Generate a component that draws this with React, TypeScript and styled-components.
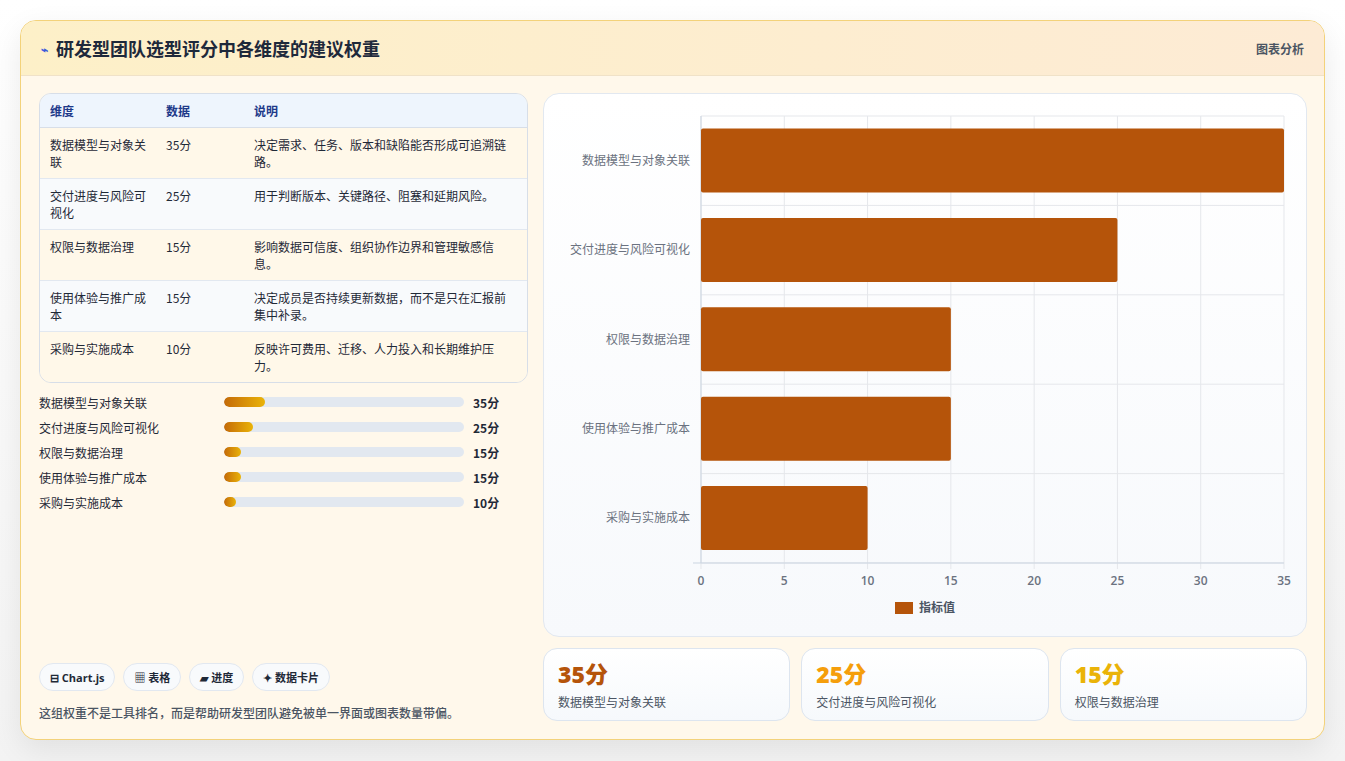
import React from "react";
import styled, { createGlobalStyle } from "styled-components";

const G = createGlobalStyle`
  html,body{margin:0;padding:0;background:#f5f5f5;}
  body{font-family:"Noto Sans CJK SC","Noto Sans",sans-serif;}
  *{box-sizing:border-box;}
`;
const Page = styled.div`width:1345px;height:761px;padding:20px 20px 21px 20px;background:linear-gradient(180deg,#fff 0%,#f3f3f3 100%);`;
const Card = styled.div`height:720px;border:1px solid #f3d27a;border-radius:16px;background:#fff8eb;box-shadow:0 10px 30px rgba(0,0,0,.08);overflow:hidden;display:flex;flex-direction:column;`;
const Header = styled.div`height:55px;flex:none;display:flex;align-items:center;justify-content:space-between;padding:0 20px;background:linear-gradient(90deg,#fdf0c8,#fdebd5);border-bottom:1px solid #f0e2c8;`;
const Title = styled.h1`margin:0;font-size:18px;font-weight:700;color:#1e293b;display:flex;align-items:center;gap:8px;`;
const Tag = styled.span`font-size:12px;font-weight:700;color:#4b5563;`;
const Body = styled.div`flex:1;display:grid;grid-template-columns:489px 764px;gap:15px;padding:17px 18px 18px 18px;`;
const Left = styled.div`display:flex;flex-direction:column;`;
const Table = styled.table`width:100%;border-collapse:separate;border-spacing:0;border:1px solid #d7dee8;border-radius:12px;overflow:hidden;font-size:12px;color:#1f2937;`;
const Th = styled.th<{w?:number}>`text-align:left;font-weight:700;color:#1e3a8a;background:#eef5fd;padding:8px 10px;height:32px;border-bottom:1px solid #d7dee8;width:${p=>p.w?p.w+"px":"auto"};`;
const Tr = styled.tr<{alt?:boolean}>`background:${p=>p.alt?"#f8fafc":"#fff8e9"};`;
const Td = styled.td<{last?:boolean}>`padding:8px 10px;vertical-align:top;line-height:17px;border-bottom:${p=>p.last?"none":"1px solid #e2e8f0"};`;
const Bars = styled.div`margin-top:10px;display:flex;flex-direction:column;gap:7px;`;
const BarRow = styled.div`display:grid;grid-template-columns:176px 240px 1fr;column-gap:9px;align-items:center;height:18px;font-size:12px;color:#1f2937;`;
const Track = styled.div`height:10px;border-radius:5px;background:#e2e8f0;overflow:hidden;`;
const Fill = styled.div`height:100%;border-radius:5px;background:linear-gradient(90deg,#c46a08,#eab308);`;
const Val = styled.span`font-weight:700;`;
const Spacer = styled.div`flex:1;`;
const Chips = styled.div`display:flex;gap:8px;`;
const Chip = styled.span`height:28px;padding:0 10px;border:1px solid #e2e8f0;border-radius:14px;background:#f8fafc;font-size:11px;font-weight:700;color:#1f2937;display:flex;align-items:center;gap:4px;font-family:"Open Sans","Noto Sans CJK SC",sans-serif;`;
const Note = styled.p`margin:13px 0 0;font-size:12px;color:#4b5563;font-weight:500;`;
const Right = styled.div`display:flex;flex-direction:column;gap:11px;`;
const ChartPanel = styled.div`height:544px;border:1px solid #e2e8f0;border-radius:16px;background:linear-gradient(180deg,#fff,#f7f9fc);`;
const Stats = styled.div`display:grid;grid-template-columns:repeat(3,1fr);gap:11px;`;
const Stat = styled.div`height:73px;border:1px solid #dde5ef;border-radius:14px;background:linear-gradient(180deg,#fff,#f6f9fc);padding:10px 14px;`;
const StatNum = styled.div<{c:string}>`font-size:23px;font-weight:800;color:${p=>p.c};line-height:30px;font-family:"Open Sans","Noto Sans CJK SC",sans-serif;`;
const StatLbl = styled.div`font-size:12px;color:#4b5563;margin-top:4px;`;

const data = [
  ["数据模型与对象关联",35,"决定需求、任务、版本和缺陷能否形成可追溯链路。"],
  ["交付进度与风险可视化",25,"用于判断版本、关键路径、阻塞和延期风险。"],
  ["权限与数据治理",15,"影响数据可信度、组织协作边界和管理敏感信息。"],
  ["使用体验与推广成本",15,"决定成员是否持续更新数据，而不是只在汇报前集中补录。"],
  ["采购与实施成本",10,"反映许可费用、迁移、人力投入和长期维护压力。"],
] as const;

function Chart(){
  const x0=157, x1=740, y0=22, band=89.4;
  const sx=(v:number)=>x0+(x1-x0)*v/35;
  return (
    <svg width="762" height="542" style={{display:"block"}}>
      {[0,5,10,15,20,25,30,35].map(v=>(
        <g key={v}>
          <line x1={sx(v)} x2={sx(v)} y1={y0} y2={y0+band*5+6} stroke="#e5e7eb"/>
          <text x={sx(v)} y={491} fontSize="12" fontWeight="600" fill="#6b7280" textAnchor="middle" fontFamily="Open Sans">{v}</text>
        </g>
      ))}
      {[0,1,2,3,4,5].map(i=><line key={i} x1={x0} x2={x1} y1={y0+band*i} y2={y0+band*i} stroke="#e5e7eb"/>)}
      <line x1={x0-8} x2={x1} y1={y0+band*5} y2={y0+band*5} stroke="#cbd5e1"/>
      <line x1={x0} x2={x0} y1={y0} y2={y0+band*5} stroke="#cbd5e1"/>
      {data.map((d,i)=>(
        <g key={i}>
          <rect x={x0} y={y0+band*i+12.5} width={sx(d[1] as number)-x0} height={64} fill="#b5540a" rx="2"/>
          <text x={x0-11} y={y0+band*i+band/2+4} fontSize="12" fill="#6b7280" textAnchor="end">{d[0]}</text>
        </g>
      ))}
      <rect x={351} y={508} width={18} height={12} fill="#b5540a"/>
      <text x={375} y={518} fontSize="12" fill="#4b5563" fontWeight="600">指标值</text>
    </svg>
  );
}

export default function App(){
  return (<Page><G/><Card>
    <Header><Title><span style={{color:"#3b5bdb",fontSize:12}}>⌁</span>研发型团队选型评分中各维度的建议权重</Title><Tag>图表分析</Tag></Header>
    <Body>
      <Left>
        <Table>
          <thead><tr><Th w={116}>维度</Th><Th w={88}>数据</Th><Th>说明</Th></tr></thead>
          <tbody>{data.map((d,i)=>(
            <Tr key={i} alt={i%2===1}><Td last={i===4}>{d[0]}</Td><Td last={i===4}>{d[1]}分</Td><Td last={i===4}>{d[2]}</Td></Tr>
          ))}</tbody>
        </Table>
        <Bars>{data.map((d,i)=>(
          <BarRow key={i}><span>{d[0]}</span><Track><Fill style={{width:`${(d[1] as number)/35*17}%`}}/></Track><Val>{d[1]}分</Val></BarRow>
        ))}</Bars>
        <Spacer/>
        <Chips><Chip>⊟ Chart.js</Chip><Chip>▦ 表格</Chip><Chip>▰ 进度</Chip><Chip>✦ 数据卡片</Chip></Chips>
        <Note>这组权重不是工具排名，而是帮助研发型团队避免被单一界面或图表数量带偏。</Note>
      </Left>
      <Right>
        <ChartPanel><Chart/></ChartPanel>
        <Stats>
          <Stat><StatNum c="#b5540a">35分</StatNum><StatLbl>数据模型与对象关联</StatLbl></Stat>
          <Stat><StatNum c="#f59e0b">25分</StatNum><StatLbl>交付进度与风险可视化</StatLbl></Stat>
          <Stat><StatNum c="#eab308">15分</StatNum><StatLbl>权限与数据治理</StatLbl></Stat>
        </Stats>
      </Right>
    </Body>
  </Card></Page>);
}
